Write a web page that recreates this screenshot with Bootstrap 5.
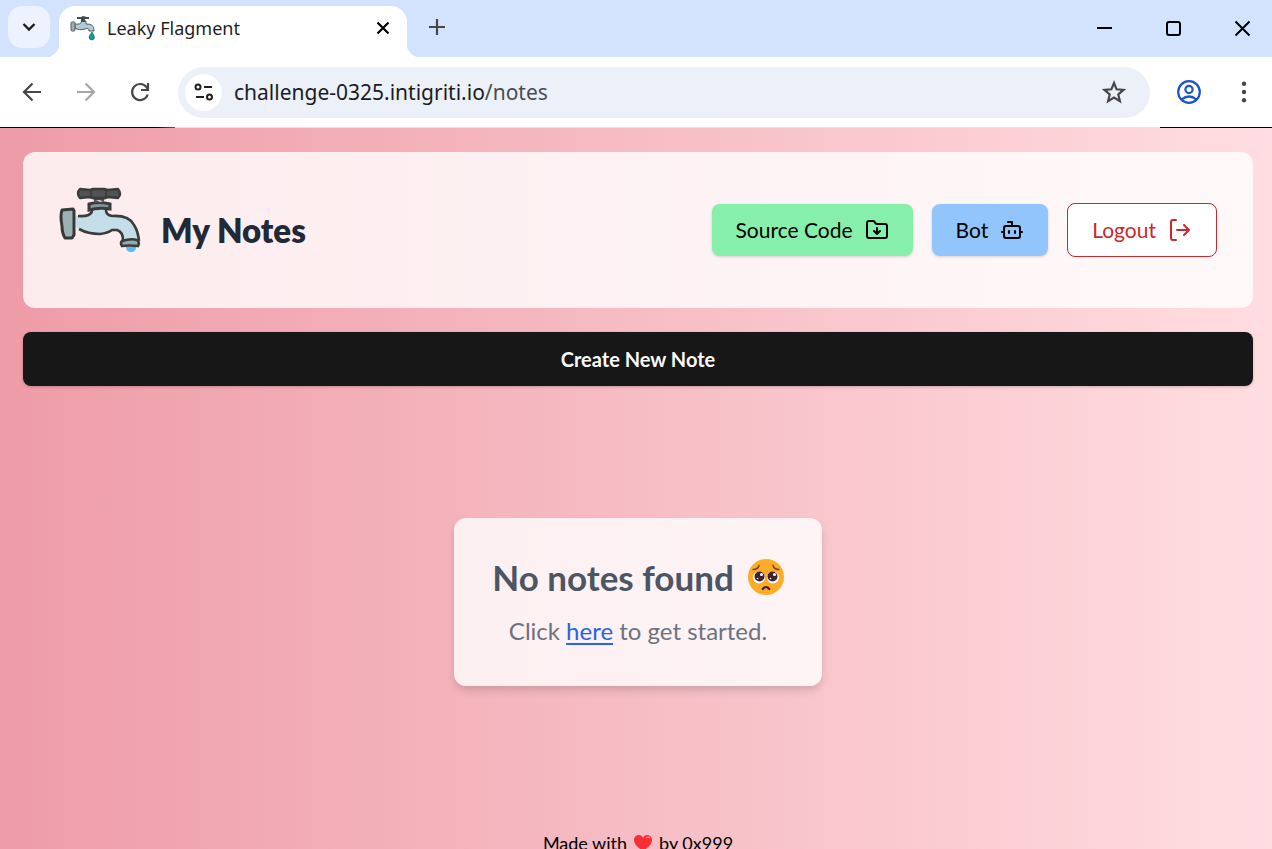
<!DOCTYPE html>
<html lang="en">
<head>
<meta charset="utf-8">
<meta name="viewport" content="width=device-width, initial-scale=1">
<title>Leaky Flagment</title>
<link href="https://cdn.jsdelivr.net/npm/bootstrap@5.3.0/dist/css/bootstrap.min.css" rel="stylesheet">
<style>
body{font-family:Lato,"Liberation Sans",sans-serif;background:#fff;color:#000}
.browser-font{font-family:"Noto Sans","Open Sans",sans-serif}
svg{display:block;flex:none}
.icon-btn{border:0;background:none;padding:0;color:#474747;display:flex;align-items:center;justify-content:center;flex:none}
/* browser frame */
.tabstrip{height:57px;background:#d3e2fd;padding-left:8px}
.tab-search{width:42px;height:42px;margin-top:6px;border-radius:14px;background:#ecf2fe;color:#1f1f1f}
.page-tab{position:relative;width:348px;height:51px;margin:6px 0 0 9px;padding:0 17px 8px 11px;border-radius:16px 16px 0 0;background:#fff;color:#1f1f1f}
.page-tab::before,.page-tab::after{content:"";position:absolute;bottom:0;width:14px;height:14px}
.page-tab::before{right:100%;background:radial-gradient(circle at 0 0,#d3e2fd 14px,#fff 15px)}
.page-tab::after{left:100%;background:radial-gradient(circle at 100% 0,#d3e2fd 14px,#fff 15px)}
.tab-title{font-size:18px;line-height:28px;margin-left:11px}
.new-tab{margin:0 0 3px 22px}
.window-btns{gap:45px;margin-right:18px}
.toolbar{height:71px;padding:0 16px 0 20px;gap:30px;border-bottom:1px solid #e3e5e9}
.toolbar-wrap{position:relative}
.toolbar-wrap::before,.toolbar-wrap::after{content:"";position:absolute;bottom:0;height:1px;background:#000}
.toolbar-wrap::before{left:0;width:175px;background:linear-gradient(90deg,#000 88%,#2b5fb8)}
.toolbar-wrap::after{right:0;width:112px}
.address{height:51px;border-radius:26px;background:#ebf0f9;padding:0 24px 0 7px;margin:0 -4px}
.site-info{width:37px;height:37px;border-radius:50%;background:#fff;color:#1f1f1f}
.url-text{font-size:21px;line-height:30px;color:#1b1c1f;margin-left:12px;min-width:0}
.url-path{color:#494c50}
.muted-icon{color:#a6a6a6}
.profile-icon{color:#1a56c8}
/* page */
.notes-page{background:linear-gradient(90deg,#ee9ca7,#ffdde1);padding:24px 19px 0 23px;min-height:0}
.title-card{background:rgba(255,255,255,.8);border-radius:12px;padding:30px 36px}
.page-title{font-size:33px;line-height:44px;font-weight:800;color:#1f2937;margin:0 0 0 20px}
.actions{gap:19px}
.action{display:flex;align-items:center;gap:12px;height:52px;border-radius:8px;padding:0 24px;font-size:21px;line-height:28px;border:0;color:#000;box-shadow:0 1px 3px rgba(0,0,0,.16)}
.source{background:#86efac}
.bot{background:#93c5fd}
.logout{height:54px;border:1px solid #c9282d;background:#fff;color:#c9282d;box-shadow:none}
.create{height:54px;border-radius:8px;border:0;background:#171717;color:#fafafa;font-size:20px;font-weight:700;box-shadow:0 1px 3px rgba(0,0,0,.2)}
.empty-area{padding:132px 0}
.empty-card{width:368px;height:168px;border-radius:12px;background:rgba(255,255,255,.8);box-shadow:0 5px 9px -1px rgba(0,0,0,.16);padding-bottom:2px}
.empty-title{font-size:35px;line-height:48px;font-weight:700;color:#4b5563;margin:0 0 12px;gap:14px}
.empty-text{font-size:24px;line-height:36px;color:#6b7280;margin:0}
.empty-text a{color:#2563eb;text-decoration-thickness:2px;text-underline-offset:3px}
.made-by{font-size:18px;line-height:26px;gap:6px;padding-top:12px}
</style>
</head>
<body class="vh-100 overflow-hidden d-flex flex-column">
<header class="browser-font flex-shrink-0">
  <div class="tabstrip d-flex">
    <button class="icon-btn tab-search" aria-label="Search tabs"><svg width="14" height="10" viewBox="0 0 14 10" fill="none" stroke="currentColor" stroke-width="2.4"><path d="M1.500 2 7 7.500 12.500 2"/></svg></button>
    <div class="page-tab d-flex align-items-center">
      <svg width="26" height="26" viewBox="0 0 26 26"><path d="M5 9q6 1 7-3h4v3c6 0 8 2 8 7h-5c0-3-2-3-4-2-4 1-7 1-10-1z" fill="#b5cad7" stroke="#4e5a60"/><rect x="1" y="7" width="4" height="9" rx="1" fill="#9cabb0" stroke="#59646a"/><path d="M7 2h4l2-1 4 1h2v2h-4v3h-4V4H7z" fill="#424b50"/><path d="M22 17q-6 7 0 8 5-1 0-8" fill="#159a91" stroke="#286c69" stroke-width=".7"/></svg>
      <span class="tab-title flex-grow-1">Leaky Flagment</span>
      <button class="icon-btn text-black" aria-label="Close tab"><svg width="14" height="14" viewBox="0 0 14 14" stroke="currentColor" stroke-width="2.2"><path d="m1.500 1.500 11 11m0-11-11 11"/></svg></button>
    </div>
    <button class="icon-btn new-tab align-self-center" aria-label="New tab"><svg width="16" height="16" viewBox="0 0 16 16" stroke="currentColor" stroke-width="2.2"><path d="M8 0v16M0 8h16"/></svg></button>
    <div class="window-btns d-flex align-items-center ms-auto">
      <button class="icon-btn text-black" aria-label="Minimize"><svg width="24" height="18" viewBox="0 0 24 18" stroke="currentColor" stroke-width="2"><path d="M5 8h15"/></svg></button>
      <button class="icon-btn text-black" aria-label="Maximize"><svg width="24" height="18" viewBox="0 0 24 18" fill="none" stroke="currentColor" stroke-width="2"><rect x="6" y="2" width="13" height="13" rx="2"/></svg></button>
      <button class="icon-btn text-black" aria-label="Close window"><svg width="24" height="18" viewBox="0 0 24 18" stroke="currentColor" stroke-width="2"><path d="m5.500 1.500 14 14m0-14-14 14"/></svg></button>
    </div>
  </div>
  <div class="toolbar-wrap">
  <div class="toolbar d-flex align-items-center">
    <button class="icon-btn" aria-label="Back"><svg width="24" height="24" viewBox="0 0 24 24" fill="none" stroke="currentColor" stroke-width="2.2"><path d="M21 12H4.500m8-8.500L4 12l8.500 8.500"/></svg></button>
    <button class="icon-btn muted-icon" aria-label="Forward"><svg width="24" height="24" viewBox="0 0 24 24" fill="none" stroke="currentColor" stroke-width="2.2"><path d="M3 12h16.500m-8-8.500L20 12l-8.500 8.500"/></svg></button>
    <button class="icon-btn" aria-label="Reload"><svg width="24" height="24" viewBox="0 0 24 24" fill="none" stroke="currentColor" stroke-width="2.2"><path d="M19.700 14.500A8 8 0 1 1 18.500 7.200L20 9M20 3v7h-7"/></svg></button>
    <div class="address d-flex align-items-center flex-grow-1">
      <button class="icon-btn site-info" aria-label="Site information"><svg width="20" height="18" viewBox="0 0 20 18" fill="none" stroke="currentColor" stroke-width="2"><circle cx="4" cy="4" r="2.500"/><path d="M10 4h8M2 14h8"/><circle cx="15.500" cy="14" r="2.500"/></svg></button>
      <div class="url-text flex-grow-1" role="textbox" aria-label="Address">challenge-0325.intigriti.io<span class="url-path">/notes</span></div>
      <button class="icon-btn" aria-label="Bookmark"><svg width="24" height="24" viewBox="0 0 24 24" fill="none" stroke="currentColor" stroke-width="2.200"><path d="m12 3 2.600 6.300 6.900.6-5.200 4.500 1.600 6.700L12 17.500l-5.900 3.600 1.600-6.700-5.200-4.500 6.900-.6z"/></svg></button>
    </div>
    <button class="icon-btn profile-icon" aria-label="Profile"><svg width="26" height="26" viewBox="0 0 26 26" fill="none" stroke="currentColor" stroke-width="2.2"><circle cx="13" cy="13" r="10.800"/><circle cx="13" cy="10.500" r="3.600"/><path d="M5.500 20.500q7.500-6 15 0"/></svg></button>
    <button class="icon-btn" aria-label="Menu"><svg width="24" height="24" viewBox="0 0 24 24" fill="currentColor"><circle cx="12" cy="3.800" r="2.200"/><circle cx="12" cy="12" r="2.200"/><circle cx="12" cy="20.200" r="2.200"/></svg></button>
  </div>
  </div>
</header>

<main class="notes-page flex-grow-1 overflow-hidden">
  <div class="title-card d-flex align-items-center">
    <svg width="82" height="96" viewBox="0 0 82 96" aria-hidden="true">
      <path d="M67 65h10q0 5-5 5t-5-5" fill="#56bdf0"/>
      <path d="M17 34q17 1 17-6h13q1 5 6 6 16-2 22 8 4 7 5 17H64q1-11-7-11-16 7-26 3-9-2-14-6z" fill="#c5dce9"/>
      <path d="M19 34q14 1 14-6M47 28q0 5 6 6 17-1 22 9 4 6 5 16M20 47q9 5 21 5 8-1 12-4h5q6 2 6 10" fill="none" stroke="#3b3b3b" stroke-width="2.600"/>
      <path d="m3 28 11-1 1 2v24l-2 3H6q-3-5-3-12-2-10 0-16z" fill="#9cb1b4" stroke="#383838" stroke-width="3" stroke-linejoin="round"/>
      <path d="M30 22q10-3 21 0v5q-11-2-21 1z" fill="#82969a" stroke="#3b3b3b" stroke-width="3"/>
      <path d="M34 16h12l-2 5h-8z" fill="#4b4b4b"/><path d="m36 19 4-1 4 1-3 1-2-1z" fill="#ddd"/>
      <path d="m21 7 10 1 3-1h11l4 1 10-1q4 5 0 9l-10-1-3 1H34l-4-1-9 1q-4-5 0-9z" fill="#505253" stroke="#393b3c" stroke-width="2.400" stroke-linejoin="round"/>
      <path d="M32 8v7m15-7v7" stroke="#393b3c" stroke-width="1.500"/>
      <path d="M63 59q9-3 15-1 3 2 1 6-9-1-16 0-2-3 0-5z" fill="#91aaaf" stroke="#3b3b3b" stroke-width="2.600"/>
    </svg>
    <h1 class="page-title">My Notes</h1>
    <div class="actions d-flex align-items-center ms-auto">
      <button class="action source">Source Code <svg width="24" height="24" viewBox="0 0 24 24" fill="none" stroke="currentColor" stroke-width="2" stroke-linecap="round" stroke-linejoin="round"><path d="M20 20a2 2 0 0 0 2-2V8a2 2 0 0 0-2-2h-7.900a2 2 0 0 1-1.690-.9L9.600 3.900A2 2 0 0 0 7.930 3H4a2 2 0 0 0-2 2v13a2 2 0 0 0 2 2Z"/><path d="M12 10v6m-3-3 3 3 3-3"/></svg></button>
      <button class="action bot">Bot <svg width="24" height="24" viewBox="0 0 24 24" fill="none" stroke="currentColor" stroke-width="2" stroke-linecap="round" stroke-linejoin="round"><path d="M12 8V4H8"/><rect width="16" height="12" x="4" y="8" rx="2"/><path d="M2 14h2m16 0h2m-7-1v2m-6-2v2"/></svg></button>
      <button class="action logout">Logout <svg width="24" height="24" viewBox="0 0 24 24" fill="none" stroke="currentColor" stroke-width="2" stroke-linecap="round" stroke-linejoin="round"><path d="M8 22H5a2 2 0 0 1-2-2V4a2 2 0 0 1 2-2h3m8 15 5-5-5-5m5 5H9"/></svg></button>
    </div>
  </div>
  <button class="create w-100 mt-4 d-block">Create New Note</button>
  <section class="empty-area d-flex justify-content-center">
    <div class="empty-card d-flex flex-column align-items-center justify-content-center">
      <h2 class="empty-title d-flex align-items-center">No notes found
        <svg width="36" height="36" viewBox="0 0 36 36" role="img" aria-label="Pleading face"><circle cx="18" cy="18" r="18" fill="#fcab2b"/><g fill="none" stroke="#6a4920" stroke-width="1.400" stroke-linecap="round"><path d="M5 10.500q5 0 6-4M31 10.500q-5 0-6-4"/></g><circle cx="11" cy="18.500" r="6" fill="#fff"/><circle cx="25" cy="18.500" r="6" fill="#fff"/><circle cx="11.500" cy="17.500" r="5" fill="#402332"/><circle cx="24.500" cy="17.500" r="5" fill="#402332"/><g fill="#fff"><circle cx="13.500" cy="15.500" r="1.500"/><circle cx="26.500" cy="15.500" r="1.500"/><circle cx="9.500" cy="19.500" r=".8"/><circle cx="22.500" cy="19.500" r=".8"/></g><path d="M14.800 30q3.200-4 6.400 0" fill="none" stroke="#402332" stroke-width="2.200" stroke-linecap="round"/></svg>
      </h2>
      <p class="empty-text">Click <a href="#">here</a> to get started.</p>
    </div>
  </section>
  <footer class="made-by d-flex justify-content-center align-items-center">Made with <svg width="20" height="18" viewBox="0 0 20 18" role="img" aria-label="love"><path d="M10 17C4 13 1 10 1 6c0-5 7-7 9-2 2-5 9-3 9 2 0 4-3 7-9 11z" fill="#f92f36"/><path d="M13 4q2-2 4 0" stroke="#ff8174" stroke-width="1.500" fill="none"/></svg> by 0x999</footer>
</main>
<script src="https://cdn.jsdelivr.net/npm/bootstrap@5.3.0/dist/js/bootstrap.bundle.min.js"></script>
</body>
</html>
